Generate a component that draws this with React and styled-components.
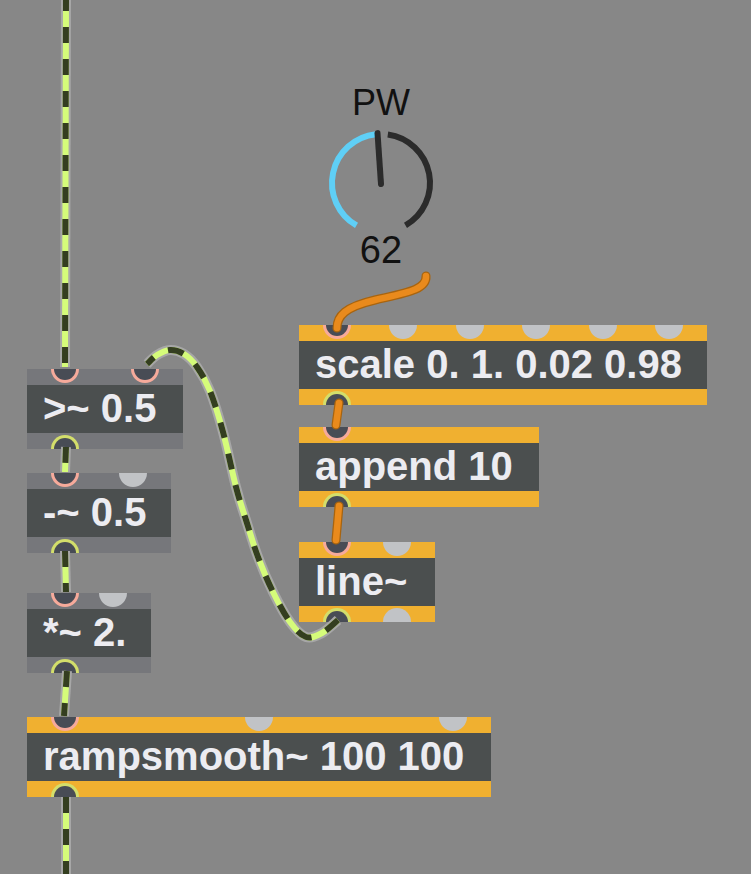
import React from "react";
import styled, { createGlobalStyle } from "styled-components";

const Global = createGlobalStyle`
  html, body { margin: 0; padding: 0; background: #878787; overflow: hidden; }
  #root { width: 751px; height: 874px; }
`;

const Canvas = styled.div`
  position: relative;
  width: 751px;
  height: 874px;
  background: #878787;
  overflow: hidden;
  font-family: "Liberation Sans", Arial, sans-serif;
`;

const Box = styled.div`
  position: absolute;
  left: ${(p) => p.$x}px;
  top: ${(p) => p.$y}px;
  width: ${(p) => p.$w}px;
  display: flex;
  flex-direction: column;
  z-index: 1;
`;

const Bar = styled.div`
  height: 16px;
  display: flex;
  justify-content: space-between;
  align-items: ${(p) => (p.$bottom ? "flex-end" : "flex-start")};
  padding: 0 24px;
  background: ${(p) => (p.$kind === "control" ? "#f0b030" : "#76777b")};
`;

const Body = styled.div`
  height: 48px;
  background: #4b4f4f;
  color: #ececf1;
  font-family: "Liberation Sans", Arial, sans-serif;
  font-weight: 700;
  font-size: 40px;
  line-height: 47px;
  padding-left: 16px;
  white-space: nowrap;
`;

const Port = styled.span`
  box-sizing: border-box;
  width: 28px;
  height: 14px;
  flex: 0 0 28px;
  background: ${(p) => (p.$on ? "#484c55" : "#c1c3c6")};
  border: ${(p) =>
    p.$on ? `3px solid ${p.$dir === "in" ? "#f6aa9b" : "#d3de6b"}` : "none"};
  ${(p) =>
    p.$dir === "in"
      ? "border-top: none; border-radius: 0 0 14px 14px;"
      : "border-bottom: none; border-radius: 14px 14px 0 0;"}
`;

const Knob = styled.div`
  position: absolute;
  left: 325px;
  top: 83px;
  width: 112px;
  display: flex;
  flex-direction: column;
  align-items: center;
  color: #111;
  font-family: "Liberation Sans", Arial, sans-serif;
`;

const KnobLabel = styled.div`
  font-size: 36px;
  line-height: 40px;
  height: 40px;
`;

const KnobValue = styled.div`
  font-size: 38px;
  line-height: 40px;
  height: 40px;
`;

const DialSvg = styled.svg`
  display: block;
  overflow: visible;
`;

const CordLayer = styled.svg`
  position: absolute;
  left: 0;
  top: 0;
  z-index: 2;
  pointer-events: none;
`;

function ObjectBox({ x, y, w, kind, text, inlets, outlets }) {
  return (
    <Box $x={x} $y={y} $w={w}>
      <Bar $kind={kind}>
        {inlets.map((on, i) => (
          <Port key={i} $dir="in" $on={on} />
        ))}
      </Bar>
      <Body>{text}</Body>
      <Bar $kind={kind} $bottom>
        {outlets.map((on, i) => (
          <Port key={i} $dir="out" $on={on} />
        ))}
      </Bar>
    </Box>
  );
}

function polar(cx, cy, r, deg) {
  const a = (deg * Math.PI) / 180;
  return [cx + r * Math.sin(a), cy - r * Math.cos(a)];
}
function arc(cx, cy, r, a0, a1) {
  const [x0, y0] = polar(cx, cy, r, a0);
  const [x1, y1] = polar(cx, cy, r, a1);
  const large = a1 - a0 > 180 ? 1 : 0;
  return `M${x0} ${y0} A${r} ${r} 0 ${large} 1 ${x1} ${y1}`;
}

function Dial() {
  const cx = 56,
    cy = 60,
    r = 49;
  const [nx, ny] = polar(cx, cy, 50, -4);
  return (
    <DialSvg width="112" height="107" viewBox="0 0 112 107">
      <path d={arc(cx, cy, r, -150, -6)} fill="none" stroke="#5fcff6" strokeWidth="6" />
      <path d={arc(cx, cy, r, 8, 150)} fill="none" stroke="#2b2b2b" strokeWidth="6" />
      <line x1={cx} y1={cy + 1} x2={nx} y2={ny} stroke="#2b2b2b" strokeWidth="6" strokeLinecap="round" />
    </DialSvg>
  );
}

function crPath(pts) {
  let d = `M${pts[0][0]} ${pts[0][1]}`;
  for (let i = 0; i < pts.length - 1; i++) {
    const p0 = pts[i - 1] || pts[i];
    const p1 = pts[i];
    const p2 = pts[i + 1];
    const p3 = pts[i + 2] || p2;
    const c1 = [p1[0] + (p2[0] - p0[0]) / 6, p1[1] + (p2[1] - p0[1]) / 6];
    const c2 = [p2[0] - (p3[0] - p1[0]) / 6, p2[1] - (p3[1] - p1[1]) / 6];
    d += ` C${c1[0].toFixed(1)} ${c1[1].toFixed(1)} ${c2[0].toFixed(1)} ${c2[1].toFixed(1)} ${p2[0]} ${p2[1]}`;
  }
  return d;
}

const bigCord = crPath([
  [338, 620],
  [322, 633],
  [306, 637],
  [290, 622],
  [273, 592],
  [258, 557],
  [246, 520],
  [236, 487],
  [223, 432],
  [210, 391],
  [197, 367],
  [184, 354],
  [170, 350],
  [157, 355],
  [147, 364],
]);

function SignalCord({ d, offset = 0 }) {
  return (
    <g fill="none" strokeLinecap="butt" strokeLinejoin="round">
      <path d={d} stroke="#a7a7a7" strokeWidth="10" />
      <path d={d} stroke="#d5fc7a" strokeWidth="6" />
      <path d={d} stroke="#343e20" strokeWidth="6" strokeDasharray="16 16" strokeDashoffset={offset} />
    </g>
  );
}

function ControlCord({ d }) {
  return (
    <g fill="none" strokeLinecap="round" strokeLinejoin="round">
      <path d={d} stroke="#a8640f" strokeWidth="9" />
      <path d={d} stroke="#e98a1c" strokeWidth="6.5" />
    </g>
  );
}

export default function App() {
  return (
    <>
      <Global />
      <Canvas>
        <Knob>
          <KnobLabel>PW</KnobLabel>
          <Dial />
          <KnobValue>62</KnobValue>
        </Knob>

        <ObjectBox x={27} y={369} w={156} kind="signal" text=">~ 0.5" inlets={[true, true]} outlets={[true]} />
        <ObjectBox x={27} y={473} w={144} kind="signal" text="-~ 0.5" inlets={[true, false]} outlets={[true]} />
        <ObjectBox x={27} y={593} w={124} kind="signal" text="*~ 2." inlets={[true, false]} outlets={[true]} />
        <ObjectBox
          x={27}
          y={717}
          w={464}
          kind="control"
          text="rampsmooth~ 100 100"
          inlets={[true, false, false]}
          outlets={[true]}
        />
        <ObjectBox
          x={299}
          y={325}
          w={408}
          kind="control"
          text="scale 0. 1. 0.02 0.98"
          inlets={[true, false, false, false, false, false]}
          outlets={[true]}
        />
        <ObjectBox x={299} y={427} w={240} kind="control" text="append 10" inlets={[true]} outlets={[true]} />
        <ObjectBox x={299} y={542} w={136} kind="control" text="line~" inlets={[true, false]} outlets={[true, false]} />

        <CordLayer width="751" height="874" viewBox="0 0 751 874">
          <SignalCord d="M66 -5 L65 367" />
          <SignalCord d="M66 447 L65 472" />
          <SignalCord d="M65 551 L66 592" />
          <SignalCord d="M67 671 L64 716" />
          <SignalCord d="M66 797 L66 890" />
          <SignalCord d={bigCord} />
          <ControlCord d="M426 276 C427 290 405 293 375 300 C345 307 337 316 337 328" />
          <ControlCord d="M339 403 L336 425" />
          <ControlCord d="M339 506 L336 540" />
        </CordLayer>
      </Canvas>
    </>
  );
}
